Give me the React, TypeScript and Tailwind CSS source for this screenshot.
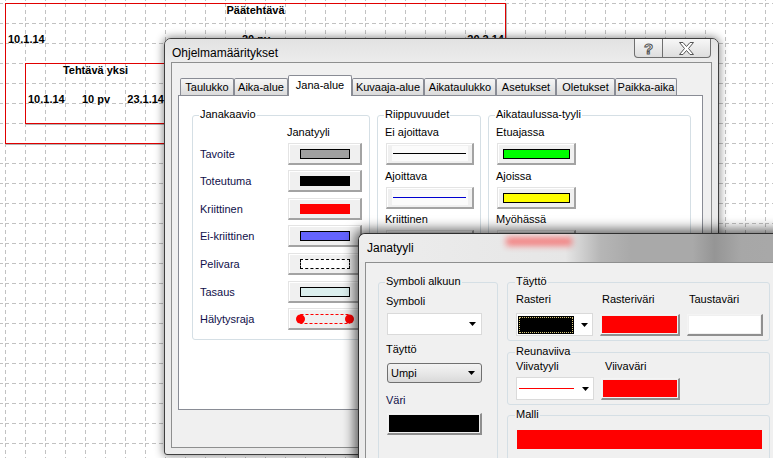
import React from 'react';

// Background chart grid + task boxes, two overlapping Windows 7 dialogs on top

const TABS = [
  { label: 'Taulukko', w: 'w-[54px]' },
  { label: 'Aika-alue', w: 'w-[54px]' },
  { label: 'Jana-alue', w: 'w-[64px]', active: true },
  { label: 'Kuvaaja-alue', w: 'w-[72px]' },
  { label: 'Aikataulukko', w: 'w-[72px]' },
  { label: 'Asetukset', w: 'w-[60px]' },
  { label: 'Oletukset', w: 'w-[59px]' },
  { label: 'Paikka-aika', w: 'w-[62px]' },
];

const btn3d =
  'bg-[#f0f0f0] border-t border-l border-t-[#e4e4e4] border-l-[#e4e4e4] border-r-2 border-b-2 border-r-[#a3a3a3] border-b-[#a3a3a3] shadow-[inset_1px_1px_0_#ffffff]';

function Swatch({ className }: { className: string }) {
  return <div className={`w-[50px] h-[10px] ${className}`} />;
}

function AlertSwatch() {
  return (
    <svg width="58" height="12" viewBox="0 0 58 12">
      <rect x="4.5" y="1.5" width="49" height="9" fill="none" stroke="#ff0000" strokeDasharray="3 2" />
      <circle cx="4.5" cy="6" r="4.5" fill="#ff0000" />
      <circle cx="53.5" cy="6" r="4.5" fill="#ff0000" />
    </svg>
  );
}

const BAR_ROWS = [
  { label: 'Tavoite', mt: 'mt-[4px]', swatch: <Swatch className="border border-black bg-[#a0a0a0]" /> },
  { label: 'Toteutuma', mt: 'mt-[5px]', swatch: <Swatch className="border border-black bg-black" /> },
  { label: 'Kriittinen', mt: 'mt-[6px]', swatch: <Swatch className="bg-[#ff0000]" /> },
  { label: 'Ei-kriittinen', mt: 'mt-[5px]', swatch: <Swatch className="border border-black bg-[#6464ff]" /> },
  { label: 'Pelivara', mt: 'mt-[6px]', swatch: <Swatch className="border border-dashed border-black bg-white" /> },
  { label: 'Tasaus', mt: 'mt-[6px]', swatch: <Swatch className="border border-black bg-[#dcefee]" /> },
  { label: 'Hälytysraja', mt: 'mt-[5px]', swatch: <AlertSwatch /> },
];

function GroupBox({
  title,
  className = '',
  bg = 'bg-white',
  left = 'left-[6px]',
  children,
}: {
  title: string;
  className?: string;
  bg?: string;
  left?: string;
  children?: React.ReactNode;
}) {
  return (
    <div className={`relative flex-none border border-[#d5dfe5] rounded-[3px] ${className}`}>
      <span className={`absolute top-[-8px] ${left} px-[1px] leading-[13px] ${bg}`}>{title}</span>
      {children}
    </div>
  );
}

function Arrow() {
  return (
    <svg width="7" height="4" viewBox="0 0 7 4" className="flex-none">
      <path d="M0 0H7L3.5 4Z" fill="#000" />
    </svg>
  );
}

function Label({ children, className = '' }: { children: React.ReactNode; className?: string }) {
  return <div className={`h-[13px] leading-[13px] whitespace-nowrap ${className}`}>{children}</div>;
}

function LineButton({ color, mt }: { color: string; mt: string }) {
  return (
    <div className={`ml-[1px] w-[88px] h-[22px] ${mt} ${btn3d} flex items-center justify-center`}>
      <div className="w-[76px] h-[15px] bg-[#fbfbfb] flex items-center justify-center">
        <div className={`w-[73px] h-px ${color}`} />
      </div>
    </div>
  );
}

function ColorButton({ color, mt, w }: { color: string; mt: string; w: string }) {
  return (
    <div className={`ml-[1px] ${w} h-[22px] ${mt} ${btn3d} flex items-center justify-center`}>
      <div className={`w-[67px] h-[10px] border border-black ${color}`} />
    </div>
  );
}

function FillButton({ color, w, className = '' }: { color: string; w: string; className?: string }) {
  return (
    <div
      className={`${w} h-[22px] flex-none p-[1px] border-t border-l border-t-[#f4f4f4] border-l-[#f4f4f4] border-r-2 border-b-2 border-r-[#8f8f8f] border-b-[#8f8f8f] bg-[#f0f0f0] ${className}`}
    >
      <div className={`w-full h-full ${color}`} />
    </div>
  );
}

function ChartBackground() {
  return (
    <>
      <svg className="absolute inset-0" width="773" height="458">
        <defs>
          <pattern id="grid" x="5" y="3" width="20" height="20" patternUnits="userSpaceOnUse">
            <line x1="0.5" y1="0" x2="0.5" y2="20" stroke="#c2c2c2" strokeDasharray="4 3" />
            <line x1="0" y1="0.5" x2="20" y2="0.5" stroke="#c2c2c2" strokeDasharray="4 3" />
          </pattern>
        </defs>
        <rect width="773" height="458" fill="url(#grid)" />
      </svg>

      {/* Päätehtävä */}
      <div className="absolute left-[5px] top-[3px] w-[501px] h-[141px] border border-[#e00000] shadow-[1px_1px_0_#b4b4b4] flex flex-col font-bold text-[11px] leading-[13px] text-black">
        <div className="text-center">Päätehtävä</div>
        <div className="mt-[16px] grid grid-cols-3 pl-[2px] pr-[1px]">
          <span>10.1.14</span>
          <span className="text-center">20 pv</span>
          <span className="text-right">20.2.14</span>
        </div>
      </div>

      {/* Tehtävä yksi */}
      <div className="absolute left-[25px] top-[63px] w-[141px] h-[61px] border border-[#e00000] shadow-[1px_1px_0_#b4b4b4] flex flex-col font-bold text-[11px] leading-[13px] text-black">
        <div className="text-center">Tehtävä yksi</div>
        <div className="mt-[16px] grid grid-cols-3 pl-[2px] pr-[1px]">
          <span>10.1.14</span>
          <span className="text-center">10 pv</span>
          <span className="text-right">23.1.14</span>
        </div>
      </div>
    </>
  );
}

function SettingsWindow() {
  return (
    <div className="absolute left-[164px] top-[38px] w-[555px] h-[417px] flex flex-col rounded-t-[7px] rounded-b-[3px] border border-[#3f3f3f] bg-[#ebebeb] shadow-[0_0_8px_1px_rgba(0,0,0,0.45)]">
      {/* title bar */}
      <div className="relative h-[23px] flex-none flex items-center pl-[7px] pt-[4px] text-[12px] text-black bg-[linear-gradient(180deg,#e2e2e2,#ececec)] rounded-t-[6px]">
        Ohjelmamääritykset
        <div className="absolute right-[7px] top-0 flex h-[19px] border border-t-0 border-[#6f6f6f] rounded-b-[4px] overflow-hidden bg-[linear-gradient(180deg,#f7f7f7,#dedede)]">
          <div className="w-[28px] border-r border-[#6f6f6f] flex items-center justify-center">
            <span className="text-[15px] font-bold leading-none text-white [-webkit-text-stroke:1px_#555]">?</span>
          </div>
          <div className="w-[47px] flex items-center justify-center">
            <svg width="15" height="13" viewBox="0 0 15 13">
              <path
                d="M0.5 0.5H4L7.5 4.5L11 0.5H14.5L9.5 6.5L14.5 12.5H11L7.5 8.5L4 12.5H0.5L5.5 6.5Z"
                fill="#fff"
                stroke="#555"
                strokeWidth="1"
              />
            </svg>
          </div>
        </div>
      </div>

      {/* client */}
      <div className="mx-[6px] mb-[6px] flex-1 flex flex-col border border-[#8e8f8f] bg-[#f0f0f0] pt-[12px] pl-[6px] pr-[8px] text-[11px] text-black">
        {/* tabs */}
        <div className="h-[20px] flex items-end pl-[2px]">
          {TABS.map(t =>
            t.active ? (
              <div
                key={t.label}
                className={`${t.w} h-[21px] -mb-px relative z-10 flex-none bg-white border border-b-0 border-[#898c95] rounded-t-[2px] pt-[3px] text-center leading-[13px]`}
              >
                {t.label}
              </div>
            ) : (
              <div
                key={t.label}
                className={`${t.w} h-[17px] flex-none border border-b-0 border-[#898c95] rounded-t-[2px] bg-[linear-gradient(180deg,#f6f6f6,#e9e9e9_50%,#dadada)] pt-[2px] text-center leading-[13px]`}
              >
                {t.label}
              </div>
            )
          )}
        </div>

        {/* tab page */}
        <div className="h-[315px] flex-none flex border border-[#898c95] bg-white pl-[13px] pt-[19px]">
          <GroupBox title="Janakaavio" className="w-[178px] h-[225px]">
            <div className="pt-[10px] pl-[7px] flex flex-col">
              <Label className="pl-[87px]">Janatyyli</Label>
              {BAR_ROWS.map(r => (
                <div key={r.label} className={`flex items-center h-[22px] ${r.mt}`}>
                  <div className="w-[88px] text-[#10104a] leading-[13px]">{r.label}</div>
                  <div className={`w-[74px] h-[22px] ${btn3d} flex items-center justify-center`}>{r.swatch}</div>
                </div>
              ))}
            </div>
          </GroupBox>

          <GroupBox title="Riippuvuudet" className="ml-[7px] w-[104px] h-[225px]">
            <div className="pt-[10px] pl-[7px] flex flex-col">
              <Label>Ei ajoittava</Label>
              <LineButton color="bg-black" mt="mt-[4px]" />
              <Label className="mt-[5px]">Ajoittava</Label>
              <LineButton color="bg-[#0000d0]" mt="mt-[4px]" />
              <Label className="mt-[4px]">Kriittinen</Label>
              <LineButton color="bg-[#ff0000]" mt="mt-[4px]" />
            </div>
          </GroupBox>

          <GroupBox title="Aikataulussa-tyyli" className="ml-[7px] w-[203px] h-[225px]">
            <div className="pt-[10px] pl-[7px] flex flex-col">
              <Label>Etuajassa</Label>
              <ColorButton color="bg-[#00ff00]" mt="mt-[4px]" w="w-[79px]" />
              <Label className="mt-[5px]">Ajoissa</Label>
              <ColorButton color="bg-[#ffff00]" mt="mt-[4px]" w="w-[79px]" />
              <Label className="mt-[4px]">Myöhässä</Label>
              <ColorButton color="bg-[#ff0000]" mt="mt-[4px]" w="w-[79px]" />
            </div>
          </GroupBox>
        </div>
        <div className="flex-1" />
      </div>
    </div>
  );
}

function BarStyleWindow() {
  return (
    <div className="absolute left-[358px] top-[233px] w-[440px] h-[240px] flex flex-col border-l border-t border-[#2f2f2f] rounded-tl-[7px] bg-[#ebebeb] shadow-[0_0_12px_4px_rgba(0,0,0,0.6)]">
      <div className="relative h-[28px] flex-none flex items-center pl-[8px] text-[12px] text-black rounded-tl-[6px] overflow-hidden bg-[linear-gradient(90deg,#ededed_0%,#e6e6e6_47%,#b6b6b6_55%,#a9a9a9_62%,#a9a9a9_76%,#959595_81%,#a7a7a7_87%,#a9a9a9_100%)]">
        <div className="absolute left-[147px] top-[3px] w-[66px] h-[9px] bg-[#ff2020] opacity-50 blur-[3px]" />
        <span className="relative">Janatyyli</span>
      </div>

      <div className="ml-[6px] flex-1 flex border-l border-t border-[#8e8f8f] bg-[#f0f0f0] pl-[12px] pt-[19px] text-[11px] text-black">
        <GroupBox title="Symboli alkuun" bg="bg-[#f0f0f0]" className="w-[120px] h-[200px]">
          <div className="pt-[12px] pl-[7px] flex flex-col">
            <Label>Symboli</Label>
            <div className="mt-[5px] ml-[1px] w-[95px] h-[22px] flex items-center justify-end pr-[5px] border border-[#dadada] bg-white">
              <Arrow />
            </div>
            <Label className="mt-[8px]">Täyttö</Label>
            <div className="mt-[7px] ml-[1px] w-[95px] h-[20px] flex items-center justify-between pl-[3px] pr-[6px] border border-[#707070] rounded-[3px] bg-[linear-gradient(180deg,#f3f3f3,#e8e8e8_50%,#d9d9d9)]">
              <span className="leading-[13px]">Umpi</span>
              <Arrow />
            </div>
            <Label className="mt-[11px] text-[#10104a]">Väri</Label>
            <FillButton color="bg-black" w="w-[95px]" className="mt-[6px] ml-[1px]" />
          </div>
        </GroupBox>

        <div className="ml-[9px] w-[263px] flex flex-col">
          <GroupBox title="Täyttö" bg="bg-[#f0f0f0]" left="left-[7px]" className="h-[59px]">
            <div className="pt-[10px] pl-[8px] grid grid-cols-[84px_87px_76px] items-start">
              <Label>Rasteri</Label>
              <Label className="pl-[2px]">Rasteriväri</Label>
              <Label className="pl-[2px]">Taustaväri</Label>
              <div className="mt-[7px] w-[77px] h-[23px] flex items-center justify-between pl-[1px] pr-[4px] border border-[#dadada] bg-white">
                <div className="w-[56px] h-[18px] bg-black outline-1 outline-dotted outline-offset-[-2px] outline-[#d8c87a]" />
                <Arrow />
              </div>
              <FillButton color="bg-[#ff0000]" w="w-[80px]" className="mt-[8px]" />
              <FillButton color="bg-white" w="w-[76px]" className="mt-[8px]" />
            </div>
          </GroupBox>

          <GroupBox title="Reunaviiva" bg="bg-[#f0f0f0]" left="left-[7px]" className="mt-[11px] h-[53px]">
            <div className="pt-[7px] pl-[8px] flex flex-col">
              <div className="flex">
                <Label className="w-[89px]">Viivatyyli</Label>
                <Label>Viivaväri</Label>
              </div>
              <div className="mt-[4px] flex items-start">
                <div className="w-[78px] h-[23px] flex items-center justify-between pl-[2px] pr-[4px] border border-[#dadada] bg-white">
                  <div className="w-[55px] h-px bg-[#ff0000]" />
                  <Arrow />
                </div>
                <FillButton color="bg-[#ff0000]" w="w-[79px]" className="ml-[7px] mt-[1px]" />
              </div>
            </div>
          </GroupBox>

          <GroupBox title="Malli" bg="bg-[#f0f0f0]" left="left-[7px]" className="mt-[10px] h-[80px]">
            <div className="mt-[14px] ml-[9px] w-[245px] h-[19px] bg-[#ff0000]" />
          </GroupBox>
        </div>
      </div>
    </div>
  );
}

export default function App() {
  return (
    <div className="relative w-[773px] h-[458px] overflow-hidden bg-white font-['Liberation_Sans',Arial,sans-serif]">
      <ChartBackground />
      <SettingsWindow />
      <BarStyleWindow />
    </div>
  );
}
